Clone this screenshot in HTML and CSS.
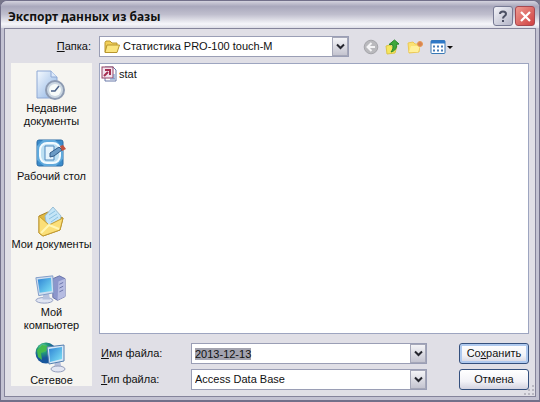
FILE: index.html
```html
<!DOCTYPE html>
<html lang="ru">
<head>
  <meta charset="UTF-8" />
  <meta name="viewport" content="width=device-width, initial-scale=1.0" />
  <title>Экспорт данных из базы</title>
  <link rel="stylesheet" href="styles.css">
</head>
<body>
  <div class="window">
    <header class="titlebar">
      <h1>Экспорт данных из базы</h1>
      <button type="button" class="title-btn help" aria-label="Справка">
        <svg width="12" height="14" viewBox="0 0 12 14"><path d="M3 5C3 1.500 9 1.500 9 5C9 7 6 7 6 9.500M6 11v2" fill="none" stroke="#4c5064" stroke-width="2"/></svg>
      </button>
      <button type="button" class="title-btn close" aria-label="Закрыть">
        <svg width="13" height="13" viewBox="0 0 13 13"><path d="M2 2l9 9M11 2l-9 9" stroke="#fff" stroke-width="2.200"/></svg>
      </button>
    </header>

    <form class="content">
      <!-- Folder bar -->
      <div class="toolbar">
        <label for="folder"><u>П</u>апка:</label>
        <div class="combo">
          <svg class="folder-icon" width="16" height="14" viewBox="0 0 16 14"><path d="M1 12V2.500L2 1h4l2 2h5v2" fill="#f2cf58" stroke="#b8962e"/><path d="M1 12.500L3 5h12.500L13 12.500z" fill="#fbe57e" stroke="#b8962e"/></svg>
          <select id="folder"><option>Статистика PRO-100 touch-M</option></select>
          <span class="arrow"><svg width="9" height="7" viewBox="0 0 9 7"><path d="M1 1.500l3.500 3.500L8 1.500" fill="none" stroke="#25262e" stroke-width="2"/></svg></span>
        </div>
        <div class="tools">
          <button type="button" aria-label="Назад">
            <svg width="16" height="16" viewBox="0 0 16 16"><circle cx="8" cy="8" r="6.800" fill="#b9b9bd" stroke="#a5a5aa"/><path d="M8.500 4L4.500 8l4 4M5 8h7" fill="none" stroke="#f4f4f6" stroke-width="2"/></svg>
          </button>
          <button type="button" aria-label="На уровень вверх">
            <svg width="16" height="16" viewBox="0 0 16 16"><path d="M1 7l4-1 1 1h6l-2 7-8 1z" fill="#f6e65e" stroke="#dcc548"/><path d="M4 5.500L9.500 1 14 5l-2.500.3C12 9 10 12 6 13c2-2.500 2.500-5 1.500-7.500z" fill="#3fa83c" stroke="#27862b"/></svg>
          </button>
          <button type="button" aria-label="Создать папку">
            <svg width="17" height="16" viewBox="0 0 17 16"><path d="M1 4l5-1 2 2h5l-1 8-10 1z" fill="#fbe272" stroke="#ecc955"/><path d="M2 13l2-6h9l-2 6z" fill="#fff09a"/><circle cx="13" cy="5" r="2.500" fill="#d88252" stroke="#e69b55"/></svg>
          </button>
          <button type="button" aria-label="Вид">
            <svg width="23" height="16" viewBox="0 0 23 16"><rect x="1" y="1.500" width="14" height="13" rx="1" fill="#fff" stroke="#3979b5"/><path d="M1 3h14" stroke="#2e78c7" stroke-width="3"/><path d="M3 7.500h11M3 11.500h11" stroke="#467bb5" stroke-width="2" stroke-dasharray="2 2"/><path d="M17 7h6l-3 3z" fill="#111"/></svg>
          </button>
        </div>
      </div>

      <div class="main">
        <!-- Places -->
        <nav class="places">
          <a href="#">
            <svg width="32" height="31" viewBox="0 0 32 31"><defs><linearGradient id="page" x2="1" y2="1"><stop stop-color="#f5faff"/><stop offset="1" stop-color="#8bb1e2"/></linearGradient></defs><path d="M3 1h14l6 6v21H3z" fill="url(#page)" stroke="#8ea8d4"/><path d="M17 1v6h6" fill="#dce9fa" stroke="#8ea8d4"/><circle cx="21" cy="20" r="9" fill="#cbd7e2" stroke="#8d9bb2" stroke-width="2"/><circle cx="21" cy="20" r="6" fill="#f7fbf9"/><path d="M25 16l-4 5h-4" fill="none" stroke="#4a6288" stroke-width="1.500"/></svg>
            Недавние<br>документы
          </a>
          <a href="#">
            <svg width="32" height="31" viewBox="0 0 32 31"><rect x="3" y="2" width="26" height="26" rx="2" fill="#3b8ccb" stroke="#2b6ba5"/><path d="M3 8l6-6h12l8 7v12l-7 7H10l-7-6z" fill="#5fa9dc"/><rect x="6" y="5" width="20" height="20" rx="7" fill="#bde0f3" stroke="#f3fbff" stroke-width="2"/><path d="M11 8h9v14h-9z" fill="#e6f4fc" stroke="#4f88bd"/><path d="M16 15l9-6 3 3-8 6-4 1z" fill="#6b9bc5" stroke="#315b88"/><path d="M26 8l3-1 3 4-4 2z" fill="#c2523f"/></svg>
            Рабочий стол
          </a>
          <a href="#">
            <svg width="32" height="31" viewBox="0 0 32 31"><path d="M5 10l9-4 15 6-3 12-17 6-4-3z" fill="#dfb842" stroke="#aa8527"/><path d="M11 10l8-9 8 9-2 10-12 1z" fill="#c4e5f7" stroke="#9abed4"/><path d="M15 9l6-4M15 13l8-5M17 16l7-5" stroke="#8cc2e2"/><path d="M5 10l10 9 14-7-3 12-17 6-4-3z" fill="#fbdf78" stroke="#c39b32"/><path d="M7 27l8-8 10 4" fill="none" stroke="#fff6b5" stroke-width="2"/></svg>
            Мои документы
          </a>
          <a href="#">
            <svg width="32" height="31" viewBox="0 0 34 31"><defs><linearGradient id="screen" x2="1" y2="1"><stop stop-color="#2d82d4"/><stop offset="1" stop-color="#80e4f7"/></linearGradient></defs><path d="M20 4l7-3 6 3v19l-8 4-5-3z" fill="#8c96cb" stroke="#6670a8"/><path d="M26 7l7-3v19l-8 4z" fill="#b6bce2"/><path d="M27 10l4-2M27 14l4-2M27 18l4-2" stroke="#6670a8"/><ellipse cx="11" cy="27" rx="9" ry="3" fill="#dfe4f2" stroke="#909dc0"/><path d="M10 20h6l1 6H9z" fill="#b6c2dd"/><path d="M2 3l18-2 1 18-16 3z" fill="#d0dff0" stroke="#7e9ac6"/><path d="M4 5l14-2 1 14-13 2z" fill="url(#screen)"/></svg>
            Мой<br>компьютер
          </a>
          <a href="#">
            <svg width="32" height="31" viewBox="0 0 32 31"><defs><radialGradient id="globe" cx=".35" cy=".25"><stop stop-color="#85e2bb"/><stop offset=".5" stop-color="#249b75"/><stop offset="1" stop-color="#17569c"/></radialGradient></defs><circle cx="12" cy="11" r="10.500" fill="url(#globe)"/><path d="M3 8l5-5 6 1-2 5-5 2 1 7-4-3z" fill="#45ba4d"/><path d="M21 19h5l2 8h-8z" fill="#b7c0dc"/><ellipse cx="24" cy="27" rx="7" ry="3" fill="#e3e6f2" stroke="#949fbd"/><path d="M13 5l17-2v16l-15 3z" fill="#d5e7f7" stroke="#547eaf"/><path d="M15 7l13-2v12l-12 3z" fill="url(#screen)"/></svg>
            Сетевое
          </a>
        </nav>

        <div class="right">
          <div class="files">
            <a href="#">
              <svg width="16" height="16" viewBox="0 0 16 16"><path d="M4 1h8l3 3v11H4z" fill="#fff" stroke="#6878a8"/><rect x="1" y="1" width="11" height="11" fill="#f2e4ee" stroke="#944264"/><path d="M3 10l4-4M4 4h5v5" fill="none" stroke="#a52e50" stroke-width="2"/><path d="M9 13h5M13 8v5" stroke="#6189c3"/></svg>
              stat
            </a>
          </div>

          <div class="fields">
            <label for="filename"><u>И</u>мя файла:</label>
            <div class="combo">
              <input type="text" id="filename" value="2013-12-13" autofocus />
              <span class="arrow"><svg width="9" height="7" viewBox="0 0 9 7"><path d="M1 1.500l3.500 3.500L8 1.500" fill="none" stroke="#25262e" stroke-width="2"/></svg></span>
            </div>
            <button type="submit" class="btn default">Со<u>х</u>ранить</button>

            <label for="filetype"><u>Т</u>ип файла:</label>
            <div class="combo">
              <select id="filetype"><option>Access Data Base</option></select>
              <span class="arrow"><svg width="9" height="7" viewBox="0 0 9 7"><path d="M1 1.500l3.500 3.500L8 1.500" fill="none" stroke="#25262e" stroke-width="2"/></svg></span>
            </div>
            <button type="button" class="btn">Отмена</button>
          </div>
        </div>
      </div>
    </form>
    <svg class="grip" width="12" height="12" viewBox="0 0 12 12"><path d="M9 1h2v2H9zM5 5h2v2H5zM9 5h2v2H9zM1 9h2v2H1zM5 9h2v2H5zM9 9h2v2H9z" fill="#b9b8c2"/></svg>
  </div>

  <script>
    document.getElementById("filename").select();
  </script>
</body>
</html>
```
FILE: styles.css
```css
* {
  box-sizing: border-box;
}
body {
  margin: 0;
  background: #77768a;
  font-family: "Liberation Sans", Arial, sans-serif;
  font-size: 11px;
  line-height: 13px;
  color: #111;
}
button, input, select {
  font: inherit;
  color: inherit;
  margin: 0;
}
.window {
  position: relative;
  display: flex;
  flex-direction: column;
  min-height: 100vh;
  padding: 0 3px 3px;
  background: #c3c2d2;
  border: 1px solid #72708a;
  border-bottom-width: 2px;
  border-radius: 7px 7px 0 0;
}
.titlebar {
  display: flex;
  align-items: center;
  gap: 2px;
  height: 27px;
  margin: 0 -3px;
  padding: 3px 4px 0 7px;
  border-radius: 6px 6px 0 0;
  background: linear-gradient(#d4d3de, #a9a8bc 20%, #c0bfce 50%, #f6f6fa 85%, #dddde6);
}
.titlebar h1 {
  flex: 1;
  margin: 0;
  font-family: "Noto Sans", Tahoma, sans-serif;
  font-size: 12px;
  font-weight: bold;
}
.title-btn {
  display: flex;
  align-items: center;
  justify-content: center;
  width: 20px;
  height: 20px;
  padding: 0;
  border: 1px solid #777a94;
  border-radius: 3px;
  background: linear-gradient(135deg, #f3f3f8, #b3b4c7);
}
.title-btn.close {
  border-color: #a64850;
  background: linear-gradient(135deg, #ee9a90, #cf3f40);
}
.content {
  flex: 1;
  display: flex;
  flex-direction: column;
  padding: 7px 6px 6px;
  border: 1px solid #85849b;
  background: #e0dfe6;
}
.toolbar {
  display: flex;
  align-items: center;
}
.toolbar label {
  width: 88px;
  padding-right: 8px;
  text-align: right;
}
.toolbar .combo {
  flex: 0 1 250px;
}
.combo {
  display: flex;
  align-items: center;
  position: relative;
  height: 21px;
  min-width: 0;
  border: 1px solid #9a9eb5;
  background: #fff;
}
.combo select, .combo input {
  flex: 1;
  min-width: 0;
  height: 100%;
  padding: 0 20px 0 3px;
  border: 0;
  outline: 0;
  background: transparent;
  appearance: none;
}
.combo input::selection {
  background: #a3a3af;
  color: #111;
}
.folder-icon {
  margin-left: 4px;
}
.arrow {
  position: absolute;
  top: 0;
  right: 0;
  bottom: 0;
  display: flex;
  align-items: center;
  justify-content: center;
  width: 16px;
  border: 1px solid #a5a7b8;
  background: linear-gradient(#f4f4f7, #c4c4d0);
  pointer-events: none;
}
.tools {
  display: flex;
  gap: 6px;
  margin-left: 14px;
}
.tools button {
  display: flex;
  padding: 0;
  border: 0;
  background: none;
}
.main {
  flex: 1;
  display: flex;
  gap: 7px;
  margin-top: 6px;
}
.places {
  width: 81px;
  height: 323px;
  padding-top: 7px;
  overflow: hidden;
  background: #f6f5f1;
}
.places a {
  display: flex;
  flex-direction: column;
  align-items: center;
  height: 68px;
  text-align: center;
  white-space: nowrap;
  color: inherit;
  text-decoration: none;
}
.places svg {
  flex: none;
  margin: 0 4px 1px 0;
}
.right {
  flex: 1;
  display: flex;
  flex-direction: column;
  min-width: 0;
}
.files {
  flex: 1;
  padding: 2px 1px;
  border: 1px solid #9da5c0;
  background: #fff;
}
.files a {
  display: flex;
  align-items: center;
  gap: 2px;
  color: inherit;
  text-decoration: none;
}
.fields {
  display: grid;
  grid-template-columns: 92px minmax(0, 1fr) 70px;
  align-items: center;
  row-gap: 5px;
  margin-top: 9px;
}
.fields label {
  padding-left: 2px;
}
.fields .combo {
  margin-right: 32px;
}
.btn {
  height: 21px;
  padding: 0;
  border: 1px solid #34507e;
  border-radius: 3px;
  background: linear-gradient(#fff, #f2f2f7 60%, #d3d3e0);
}
.btn.default {
  box-shadow: inset 0 0 0 2px #b0caef;
}
.grip {
  position: absolute;
  right: 4px;
  bottom: 4px;
}
@media (max-width: 480px) {
  .fields .combo {
    margin-right: 8px;
  }
}
```
